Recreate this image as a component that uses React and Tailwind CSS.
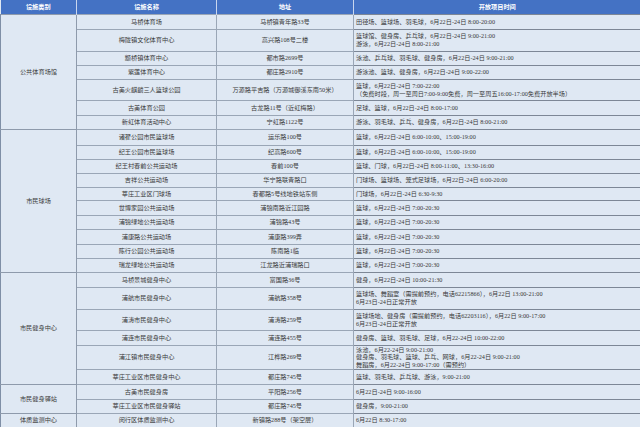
import React from "react";

const sections = [
  {
    label: "公共体育场馆",
    rows: [
      { h: "h-[15px]", name: "马桥体育场", addr: "马桥镇青年路33号", time: ["田径场、篮球场、羽毛球，6月22日-24日 8:00-20:00"] },
      { h: "h-[22px]", name: "梅陇镇文化体育中心", addr: "高兴路108号二楼", time: ["篮球馆、健身房、乒乓球，6月22日-24日 9:00-21:00", "游泳，6月22日-24日 8:00-21:00"] },
      { h: "h-[14px]", name: "颛桥镇体育中心", addr: "都市路2699号", time: ["泳池、乒乓球、羽毛球、健身房，6月22日-24日 9:00-21:00"] },
      { h: "h-[14px]", name: "紫莲体育中心", addr: "都庄路2910号", time: ["游泳池、篮球、健身房，6月22日-24日 9:00-22:00"] },
      { h: "h-[21px]", name: "古美火麒麟三人篮球公园", addr: "万源路平吉路（万源城御溪东南50米）", time: ["篮球，6月22日-24日 7:00-22:00", "（免费时段，周一至周日7:00-9:00免费，周一至周五16:00-17:00免费开放半场）"] },
      { h: "h-[15px]", name: "古美体育公园", addr: "古龙路11号（近虹梅路）", time: ["足球、篮球，6月22日-24日 8:00-17:00"] },
      { h: "h-[14px]", name: "新虹体育活动中心", addr: "宁虹路1122号", time: ["游泳、羽毛球、乒乓、健身房，6月22日-24日 8:00-21:00"] },
    ],
  },
  {
    label: "市民球场",
    rows: [
      { h: "h-[16px]", name: "诸翟公园市民篮球场", addr: "运乐路100号", time: ["篮球，6月22日-24日 6:00-10:00、15:00-19:00"] },
      { h: "h-[14px]", name: "纪王公园市民篮球场", addr: "纪高路600号", time: ["篮球，6月22日-24日 6:00-10:00、15:00-19:00"] },
      { h: "h-[14px]", name: "纪王村春前公共运动场", addr: "春前100号", time: ["篮球、门球，6月22日-24日 8:00-11:00、13:30-16:00"] },
      { h: "h-[14px]", name: "吉祥公共运动场", addr: "华宁路联青路口", time: ["门球场、篮球场、笼式足球场，6月22日-24日 6:00-20:00"] },
      { h: "h-[13px]", name: "莘庄工业区门球场", addr: "春都路5号线地铁站东侧", time: ["门球场，6月22日-24日 6:30-9:30"] },
      { h: "h-[15px]", name: "世博家园公共运动场", addr: "浦锦南路近江园路", time: ["篮球，6月22日-24日 7:00-20:30"] },
      { h: "h-[14px]", name: "浦锦绿地公共运动场", addr: "浦锦路43号", time: ["篮球，6月22日-24日 7:00-20:30"] },
      { h: "h-[15px]", name: "浦康路公共运动场", addr: "浦康路399弄", time: ["篮球，6月22日-24日 7:00-20:30"] },
      { h: "h-[14px]", name: "陈行公园公共运动场", addr: "陈南路1临", time: ["篮球，6月22日-24日 7:00-20:30"] },
      { h: "h-[14px]", name: "瑞龙绿地公共运动场", addr: "江龙路近浦瑞路口", time: ["篮球，6月22日-24日 7:00-20:30"] },
    ],
  },
  {
    label: "市民健身中心",
    rows: [
      { h: "h-[15px]", name: "马桥景城健身中心", addr: "富国路36号", time: ["健身，6月22日-24日 10:00-21:30"] },
      { h: "h-[22px]", name: "浦航市民健身中心", addr: "浦航路358号", time: ["篮球场、舞蹈室（需提前预约，电话62215866），6月22日 13:00-21:00", "6月23日-24日正常开放"] },
      { h: "h-[21px]", name: "浦涛市民健身中心", addr: "浦涛路259号", time: ["篮球场地、健身房（需提前预约，电话62203116），6月22日 9:00-17:00", "6月23日-24日正常开放"] },
      { h: "h-[15px]", name: "浦连市民健身中心", addr: "浦连路455号", time: ["健身房、篮球、羽毛球、足球，6月22-24日 10:00-22:00"] },
      { h: "h-[24px]", name: "浦江镇市民健身中心", addr: "江桦路269号", time: ["泳池，6月22-24日 9:00-21:00", "健身房、羽毛球、篮球、乒乓、网球，6月22-24日 9:00-21:00", "舞蹈房，6月22-24日 9:00-17:00（需预约）"] },
      { h: "h-[15px]", name: "莘庄工业区市民健身中心", addr: "都庄路745号", time: ["篮球、羽毛球、乒乓球、游泳，9:00-21:00"] },
    ],
  },
  {
    label: "市民健身驿站",
    rows: [
      { h: "h-[15px]", name: "古美市民健身房", addr: "平阳路256号", time: ["6月22日-24日 9:00-16:00"] },
      { h: "h-[14px]", name: "莘庄工业区市民健身驿站", addr: "都庄路745号", time: ["健身房，9:00-21:00"] },
    ],
  },
  {
    label: "体质监测中心",
    rows: [
      { h: "h-[14px]", name: "闵行区体质监测中心", addr: "新镇路288号（架空层）", time: ["6月22日 8:30-17:00"] },
    ],
  },
];

export default function App() {
  return (
    <div className="w-[640px] h-[427px] overflow-hidden bg-[#dfe8f3] font-['Liberation_Serif','Noto_Sans_CJK_SC',serif] text-[6.2px] leading-[7.6px] text-[#3a3a3a]">
      <table className="w-[640px] table-fixed border-collapse">
        <colgroup>
          <col className="w-[76px]" />
          <col className="w-[140px]" />
          <col className="w-[137px]" />
          <col className="w-[287px]" />
        </colgroup>
        <thead>
          <tr className="h-[14px] bg-[#4472c4] text-white">
            <th className="p-0 font-bold font-['Noto_Sans_CJK_SC',sans-serif] border-r border-[#c9d6ee]">设施类别</th>
            <th className="p-0 font-bold font-['Noto_Sans_CJK_SC',sans-serif] border-r border-[#c9d6ee]">设施名称</th>
            <th className="p-0 font-bold font-['Noto_Sans_CJK_SC',sans-serif] border-r border-[#c9d6ee]">地址</th>
            <th className="p-0 font-bold font-['Noto_Sans_CJK_SC',sans-serif]">开放项目时间</th>
          </tr>
        </thead>
        <tbody>
          {sections.map((s) =>
            s.rows.map((r, i) => (
              <tr key={s.label + i} className={r.h}>
                {i === 0 && (
                  <td
                    rowSpan={s.rows.length}
                    className="p-0 text-center align-middle border border-l-[#7f8fa6] border-[#8e9aab]"
                  >
                    {s.label}
                  </td>
                )}
                <td className="p-0 text-center align-middle border border-[#9aa6b6] whitespace-nowrap">{r.name}</td>
                <td className="p-0 text-center align-middle border border-[#9aa6b6] whitespace-nowrap">{r.addr}</td>
                <td className="p-0 pl-[2px] text-left align-middle border border-[#7d8796] border-l-[#555b66] whitespace-nowrap">
                  {r.time.map((t, k) => (
                    <div key={k}>{t}</div>
                  ))}
                </td>
              </tr>
            ))
          )}
        </tbody>
      </table>
    </div>
  );
}
